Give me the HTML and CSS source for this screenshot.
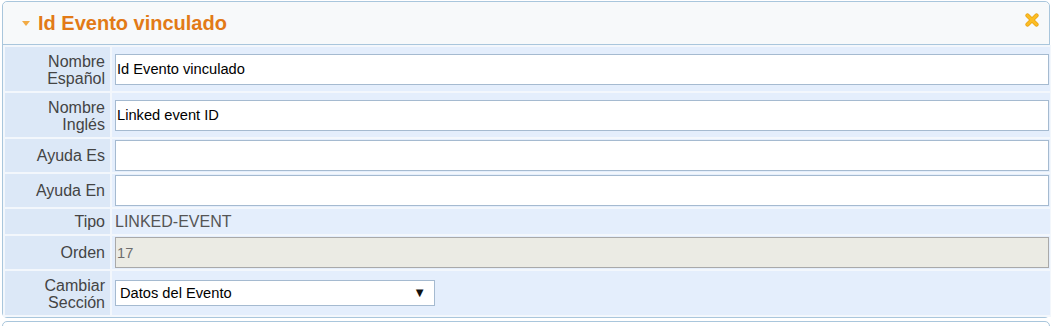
FILE: index.html
```html
<!DOCTYPE html>
<html lang="es">
<head>
<meta charset="utf-8">
<title>Id Evento vinculado</title>
<link rel="stylesheet" href="styles.css">
</head>
<body>
<div class="panel">
  <div class="panel-header">
    <div class="panel-title">
      <span class="caret"></span>
      <span class="title-text">Id Evento vinculado</span>
    </div>
    <span class="close-btn" aria-label="Cerrar">
      <svg width="14" height="14" viewBox="0 0 14 14">
        <path d="M2.5 2.5 L11.5 11.5 M11.5 2.5 L2.5 11.5" stroke="#e9a10f" stroke-width="4.2" stroke-linecap="round"/>
        <path d="M2.5 2.5 L11.5 11.5 M11.5 2.5 L2.5 11.5" stroke="#fbbd24" stroke-width="2.8" stroke-linecap="round"/>
      </svg>
    </span>
  </div>
  <table class="form-table">
    <tr class="row-two">
      <th>Nombre<br>Español</th>
      <td><input class="field" type="text" value="Id Evento vinculado"></td>
    </tr>
    <tr class="row-two">
      <th>Nombre<br>Inglés</th>
      <td><input class="field" type="text" value="Linked event ID"></td>
    </tr>
    <tr>
      <th>Ayuda Es</th>
      <td><input class="field" type="text" value=""></td>
    </tr>
    <tr>
      <th>Ayuda En</th>
      <td><input class="field" type="text" value=""></td>
    </tr>
    <tr class="row-plain">
      <th>Tipo</th>
      <td class="plain-value">LINKED-EVENT</td>
    </tr>
    <tr>
      <th>Orden</th>
      <td><input class="field field-disabled" type="text" value="17" disabled></td>
    </tr>
    <tr class="row-two">
      <th>Cambiar<br>Sección</th>
      <td>
        <div class="select-wrap">
          <select class="select">
            <option>Datos del Evento</option>
          </select>
        </div>
      </td>
    </tr>
  </table>
</div>
<div class="panel panel-next"></div>
</body>
</html>
```
FILE: styles.css
```css
html, body {
  margin: 0;
  padding: 0;
  background: #ffffff;
}

body {
  font-family: "Liberation Sans", Arial, sans-serif;
  overflow: hidden;
}

.panel {
  box-sizing: border-box;
  width: 1048px;
  margin: 1px 0 0 2px;
  border: 1px solid #a9c6dc;
  border-radius: 5px;
  background: #ffffff;
}

.panel-header {
  height: 42px;
  display: flex;
  justify-content: space-between;
  align-items: center;
  padding: 0 10px 0 19px;
  background: #f7f9fa;
  border-bottom: 1px solid #a9c6dc;
  border-radius: 5px 5px 0 0;
}

.panel-title {
  display: flex;
  align-items: center;
}

.caret {
  width: 0;
  height: 0;
  border-left: 4px solid transparent;
  border-right: 4px solid transparent;
  border-top: 5px solid #f2ab45;
  margin: 1px 8px 0 0;
}

.title-text {
  font-size: 20px;
  font-weight: bold;
  color: #e27a17;
  line-height: 24px;
}

.close-btn {
  display: flex;
  align-self: flex-start;
  margin-top: 11px;
}

.form-table {
  border-collapse: separate;
  border-spacing: 2px;
  width: 1049px;
  margin-left: 0;
  background: #f3f7fc;
}

.form-table th {
  width: 95px;
  padding: 5px 5px;
  background: #dce8f7;
  color: #444444;
  font-size: 16px;
  font-weight: normal;
  line-height: 17px;
  text-align: right;
  vertical-align: middle;
}

.row-two th {
  padding: 6px 5px 4px;
}

.form-table td {
  padding: 1px 1px 1px 3px;
  background: #e4eefc;
  vertical-align: middle;
}

.row-plain th {
  padding: 4px 5px;
}

.plain-value {
  font-size: 16px;
  color: #555555;
  line-height: 17px;
}

.field {
  box-sizing: border-box;
  display: block;
  width: 100%;
  height: 31px;
  margin: 0;
  padding: 0 1px;
  border: 1px solid #a5bad0;
  background: #ffffff;
  font-family: "Liberation Sans", Arial, sans-serif;
  font-size: 11pt;
  color: #000000;
  outline: none;
}

.field-disabled {
  background: #ebebe4;
  border-color: #a9a9a9;
  color: #6d6d6d;
}

.select-wrap {
  position: relative;
  width: 320px;
  margin: 0;
}

.select-wrap::after {
  content: "\25BC";
  position: absolute;
  right: 9px;
  top: 5px;
  font-size: 13px;
  color: #111111;
  pointer-events: none;
}

.select {
  box-sizing: border-box;
  display: block;
  width: 320px;
  height: 26px;
  margin: 0;
  padding: 0 4px;
  border: 1px solid #a5bad0;
  border-radius: 0;
  background: #ffffff;
  font-family: "Liberation Sans", Arial, sans-serif;
  font-size: 11pt;
  color: #000000;
  -webkit-appearance: none;
  appearance: none;
  outline: none;
}

.panel-next {
  margin-top: 3px;
  height: 40px;
}
```
